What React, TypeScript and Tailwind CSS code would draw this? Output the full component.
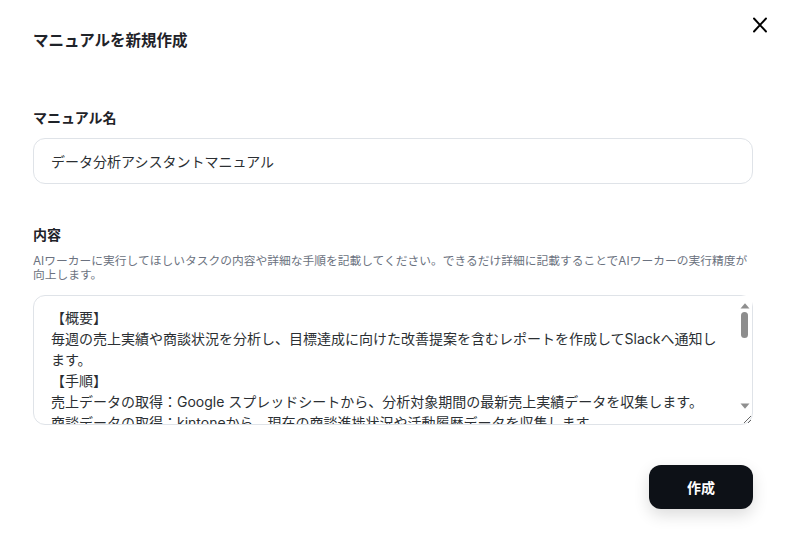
import { useState } from 'react'

const defaultContent = `【概要】
毎週の売上実績や商談状況を分析し、目標達成に向けた改善提案を含むレポートを作成してSlackへ通知します。
【手順】
売上データの取得：Google スプレッドシートから、分析対象期間の最新売上実績データを収集します。
商談データの取得：kintoneから、現在の商談進捗状況や活動履歴データを収集します。
データの集計：取得したデータを担当者別・商品別に集計し、前週との比較を行います。
目標との比較：月間目標に対する達成率を算出し、未達の項目を洗い出します。
課題の分析：達成率が低い項目について、原因となっている要因を分析します。
改善提案の作成：分析結果をもとに、具体的な改善アクションを提案します。
レポートの作成：集計結果・分析内容・改善提案をまとめたレポートを作成します。
Slackへの通知：作成したレポートを指定のSlackチャンネルへ投稿します。
【注意事項】
数値は必ず元データと照合し、誤りがないことを確認してください。
個人情報や機密情報はレポートに含めないでください。`

function FakeScrollbar() {
  return (
    <div className="pointer-events-none absolute right-px top-px flex h-[113px] w-[15px] flex-col items-center bg-white pt-[7px]">
      <svg width="10" height="6" viewBox="0 0 10 6">
        <path d="M0.5 5.5L5 0.3L9.5 5.5Z" fill="#8f8f8f" />
      </svg>
      <div className="mt-[3px] h-[26px] w-[7px] rounded-full bg-[#8d8d8d]" />
      <div className="flex-1" />
      <svg width="10" height="6" viewBox="0 0 10 6">
        <path d="M0.5 0.5L5 5.7L9.5 0.5Z" fill="#8f8f8f" />
      </svg>
    </div>
  )
}

export default function App() {
  const [name, setName] = useState('データ分析アシスタントマニュアル')
  const [content, setContent] = useState(defaultContent)

  return (
    <div
      className="h-[535px] w-full bg-white pl-[33px] pr-[36px] text-[#1f2329]"
      style={{ fontFamily: 'Inter, "Noto Sans CJK JP", sans-serif' }}
    >
      {/* header */}
      <div className="flex items-start justify-between pt-[29px]">
        <h2 className="text-[15.5px] font-bold leading-6">マニュアルを新規作成</h2>
        <button type="button" className="-mr-[19px] -mt-[16px] p-[4px] text-black">
          <svg width="16" height="16" viewBox="0 0 16 16" fill="none" stroke="currentColor" strokeWidth="1.9" strokeLinecap="round">
            <path d="M2 1.5l12 13M14 1.5L2 14.5" />
          </svg>
        </button>
      </div>

      {/* name */}
      <div className="mt-[55px]">
        <label className="block text-[14px] font-bold leading-5">マニュアル名</label>
        <input
          value={name}
          onChange={(e) => setName(e.target.value)}
          className="mt-[10px] h-[46px] w-full rounded-xl border border-[#dfe3e8] px-[17px] text-[14px] text-[#2b2f33] outline-none"
        />
      </div>

      {/* content */}
      <div className="mt-[41px]">
        <label className="block text-[14px] font-bold leading-5">内容</label>
        <p className="mt-[9px] text-[11.75px] leading-[14px] text-[#6b7280]">
          AIワーカーに実行してほしいタスクの内容や詳細な手順を記載してください。できるだけ詳細に記載することでAIワーカーの実行精度が向上します。
        </p>
        <div className="relative mt-[13px]">
          <textarea
            value={content}
            onChange={(e) => setContent(e.target.value)}
            className="block h-[130px] w-full rounded-xl border border-[#dfe3e8] pl-[17px] pr-[32px] pt-[11px] text-[14px] leading-[21px] text-[#2b2f33] outline-none"
          />
          <FakeScrollbar />
        </div>
      </div>

      <div className="mt-[40px] flex justify-end">
        <button
          type="button"
          className="h-[44px] w-[104px] rounded-xl bg-[#0d1117] text-[14px] font-bold text-white shadow-[0_6px_16px_rgba(0,0,0,0.14)]"
        >
          作成
        </button>
      </div>
    </div>
  )
}
